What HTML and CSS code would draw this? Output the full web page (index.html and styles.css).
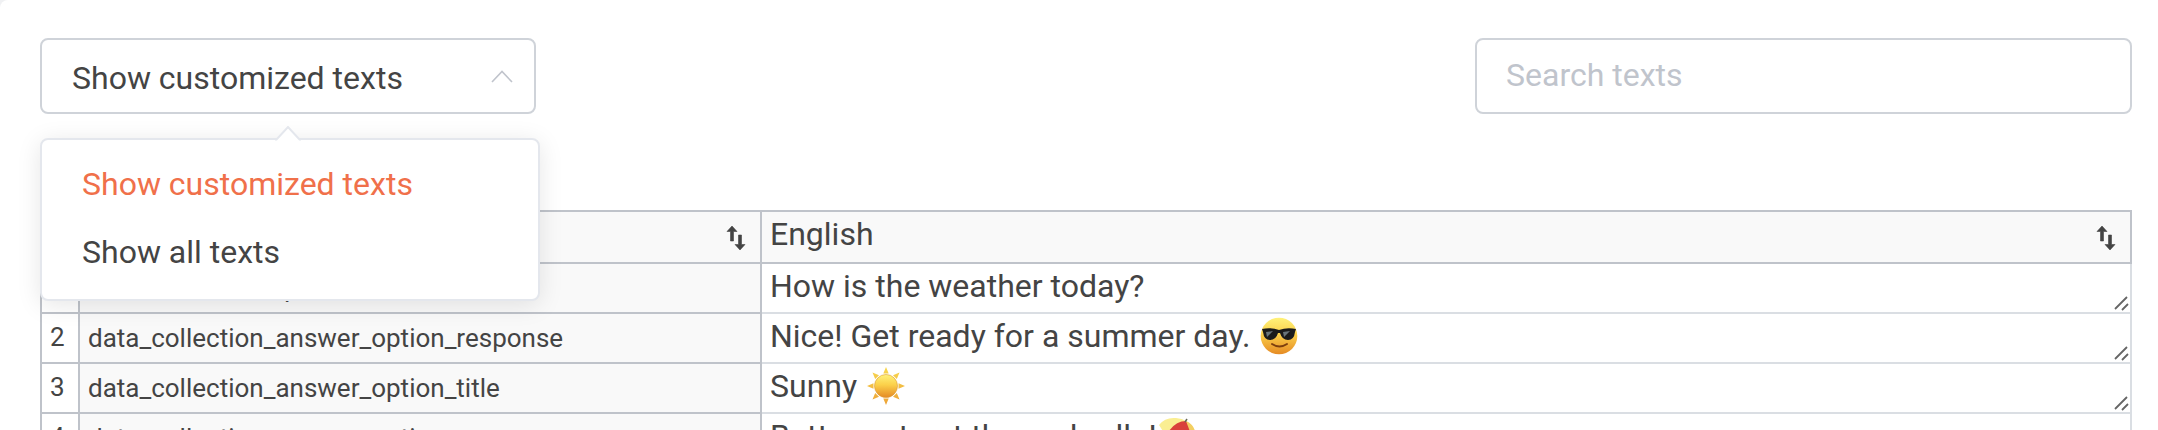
FILE: index.html
```html
<!DOCTYPE html>
<html lang="en">
<head>
<meta charset="utf-8">
<title>Custom texts</title>
<link rel="stylesheet" href="styles.css">
</head>
<body>
<svg class="defs" aria-hidden="true">
  <defs>
    <linearGradient id="gold" x1="0" y1="0" x2="0" y2="1"><stop offset="0" stop-color="#fff27a"/><stop offset=".45" stop-color="#fbd04a"/><stop offset="1" stop-color="#e58a24"/></linearGradient>
    <linearGradient id="ray" x1="0" y1="0" x2="0" y2="1"><stop offset="0" stop-color="#f8d84e"/><stop offset="1" stop-color="#eda338"/></linearGradient>
    <symbol id="sort" viewBox="0 0 20 26"><path d="M6 1 11 6.500H7.500V16H4.500V6.500H1ZM14 25 9 19.500h3.500V10h3v9.500H19Z" fill="#444" stroke="#444" stroke-width=".6"/></symbol>
    <symbol id="grip" viewBox="0 0 16 16"><path d="M2 14 14 2M9 15 15 9" stroke="#666" stroke-width="1.8" fill="none"/></symbol>
  </defs>
</svg>
<main class="panel">
  <div class="toolbar">
    <div class="picker">
      <div class="select"><span>Show customized texts</span>
        <svg class="chevron" viewBox="0 0 22 13"><path d="M1 12 11 1.500 21 12" fill="none" stroke="#c0c4cc" stroke-width="1.6"/></svg>
      </div>
      <div class="menu">
        <svg class="tip" viewBox="0 0 26 15"><path d="M1 14 13 1 25 14V15H1Z" fill="#fff"/><path d="M0 13.500H1.500L13 1 24.500 13.500H26" fill="none" stroke="#e4e7ed" stroke-width="2"/></svg>
        <div class="option active">Show customized texts</div>
        <div class="option">Show all texts</div>
      </div>
    </div>
    <input class="search" type="text" placeholder="Search texts">
  </div>
  <div class="table">
    <div class="row head">
      <div class="num"></div>
      <div class="key"><svg class="sort"><use href="#sort"/></svg></div>
      <div class="text"><span>English</span><svg class="sort"><use href="#sort"/></svg></div>
    </div>
    <div class="row"><div class="num">1</div><div class="key">data_collection_question</div><div class="text">How is the weather today?<svg class="grip"><use href="#grip"/></svg></div></div>
    <div class="row"><div class="num">2</div><div class="key">data_collection_answer_option_response</div><div class="text">Nice! Get ready for a summer day.
      <svg class="emoji" viewBox="0 0 38 38"><circle cx="19" cy="19" r="18.300" fill="url(#gold)"/><path d="M2 12Q11 10 19 13Q27 10 36 12L35 15Q34 23 28 23Q22 23 20 16H18Q16 23 10 23Q4 23 3 15Z" fill="#1b1b1b"/><path d="M6 15l7-1-6 6zM23 15l7-1-6 6z" fill="#69747a"/><path d="M12 27Q19.500 32 27 27" fill="none" stroke="#7d3f0e" stroke-width="2" stroke-linecap="round"/></svg>
      <svg class="grip"><use href="#grip"/></svg></div></div>
    <div class="row"><div class="num">3</div><div class="key">data_collection_answer_option_title</div><div class="text">Sunny
      <svg class="emoji" viewBox="0 0 38 38"><path d="M19 0l2.700 6.500h-5.400zM19 38l2.700-6.500h-5.400zM0 19l6.500-2.700v5.400zM38 19l-6.500-2.700v5.400zM5.500 5.500l6.500 2.700-3.800 3.800zM32.500 5.500l-6.500 2.700 3.800 3.800zM5.500 32.500l6.500-2.700-3.800-3.800zM32.500 32.500l-6.500-2.700 3.800-3.800z" fill="url(#ray)"/><circle cx="19" cy="19" r="11.500" fill="url(#gold)" stroke="#dc9a35" stroke-width=".6"/></svg>
      <svg class="grip"><use href="#grip"/></svg></div></div>
    <div class="row"><div class="num">4</div><div class="key">data_collection_answer_option</div><div class="text">Better get out the umbrella!<svg class="emoji" viewBox="0 0 38 38"><path d="M0 8Q6 0 17 1Q29 2 35 12L37 20 14 30Z" fill="#faee92"/><path d="M10 14Q17 4 27 4Q31 8 33 20L16 28Z" fill="#d9403b"/><path d="M27 4Q34 7 36 14L33 20Z" fill="#f3cf62"/><path d="M26 5 28 2" stroke="#665" stroke-width="1.500"/></svg></div></div>
  </div>
</main>
</body>
</html>
```
FILE: styles.css
```css
* { box-sizing: border-box; }
body { margin: 0; height: 430px; overflow: hidden; background: #f0f1f3; font-family: Roboto, sans-serif; font-size: 32px; color: #444; }
.defs { position: absolute; width: 0; height: 0; }
.panel { height: 430px; padding: 38px 26px 0 40px; overflow: hidden; background: #fff; border-top-left-radius: 8px; }
.toolbar { display: flex; justify-content: space-between; height: 172px; align-items: flex-start; }
.picker { position: relative; width: 496px; }
.select { display: flex; align-items: center; justify-content: space-between; height: 76px; padding: 4px 21px 0 30px; border: 2px solid #cfd3d9; border-radius: 8px; }
.chevron { width: 22px; height: 13px; margin-top: -4px; }
.menu { position: absolute; z-index: 2; left: 0; top: 100px; width: 500px; height: 163px; padding: 10px 0; background: #fff; border: 2px solid #e4e7ed; border-radius: 8px; box-shadow: 0 4px 24px rgba(0, 0, 0, .1); }
.tip { position: absolute; left: 233px; top: -14px; width: 26px; height: 15px; }
.option { height: 68px; line-height: 68px; padding-left: 40px; }
.active { color: #f0704a; }
.search { width: 657px; height: 76px; padding: 0 30px 2px 29px; border: 2px solid #cfd3d9; border-radius: 8px; font: 32px Roboto, sans-serif; outline: none; }
.search::placeholder { color: #c0c4cc; }
.table { width: 2092px; border-top: 2px solid #bfc3ca; border-left: 2px solid #bfc3ca; }
.row { display: grid; grid-template-columns: 38px 682px 1fr; grid-template-rows: 100%; height: 50px; }
.row > div { border-right: 2px solid #bfc3ca; border-bottom: 2px solid #bfc3ca; white-space: nowrap; }
.num { padding-left: 8px; font-size: 26px; line-height: 46px; }
.key { padding-left: 8px; font-size: 26px; line-height: 48px; background: #f9f9f9; }
.text { position: relative; padding-left: 8px; line-height: 44px; }
.row > div.text { border-color: #dadee3; }
.head { height: 52px; }
.head > div { display: flex; background: #f9f9f9; }
.row.head > div.text { border-color: #bfc3ca; }
.sort { width: 20px; height: 26px; margin: 13px 14px 0 auto; }
.grip { position: absolute; right: 1px; bottom: 1px; width: 16px; height: 16px; }
.emoji { width: 38px; height: 38px; margin-left: 2px; vertical-align: -8px; }
```
